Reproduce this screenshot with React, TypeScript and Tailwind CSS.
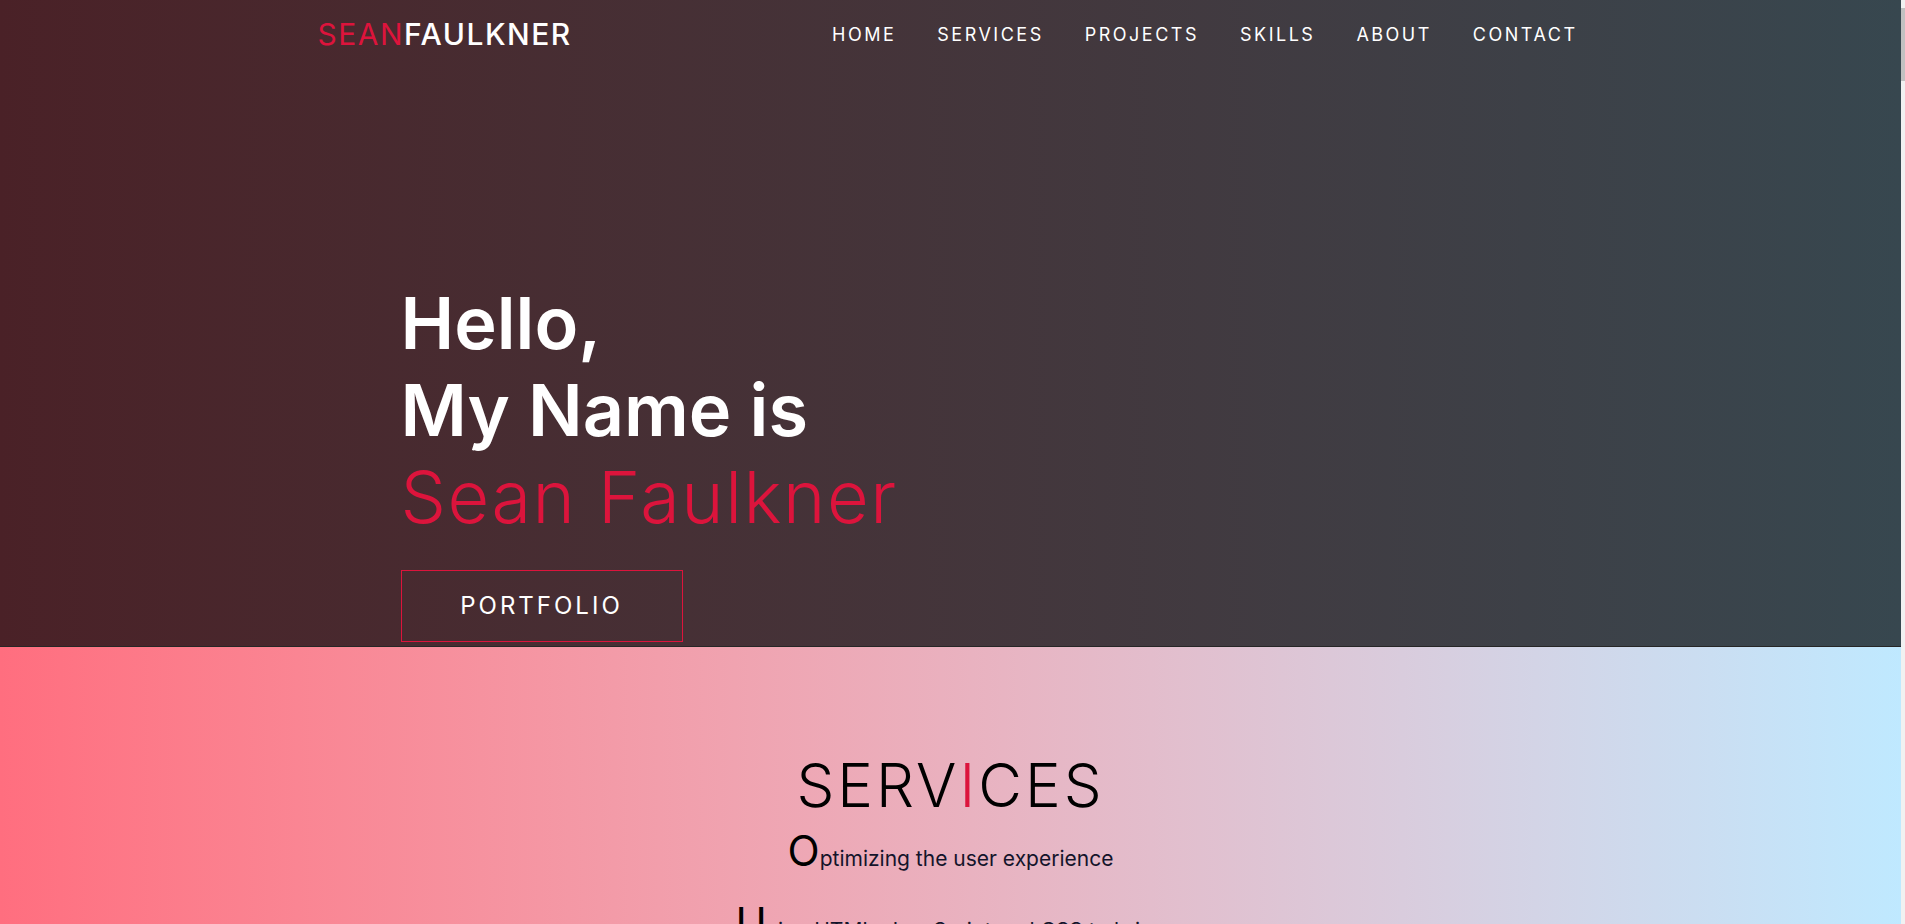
import React from "react";

const navLinks = ["HOME", "SERVICES", "PROJECTS", "SKILLS", "ABOUT", "CONTACT"];

export default function App() {
  return (
    <div className="flex h-[924px] w-full overflow-hidden font-['Inter','Open_Sans',sans-serif]">
      <main className="flex-1 min-w-0">
        {/* hero */}
        <section className="h-[647px] bg-gradient-to-r from-[#4a2127] to-[#37474f] border-b border-[#262626] flex flex-col">
          <nav className="max-w-[1266px] w-full mx-auto h-[68px] flex items-center justify-between">
            <a href="#" className="text-[30px] tracking-[1.5px] leading-none">
              <span className="text-[#dc143c] font-normal">SEAN</span>
              <span className="text-white font-medium">FAULKNER</span>
            </a>
            <ul className="flex items-center gap-[41px] pr-[6px]">
              {navLinks.map((link) => (
                <li key={link}>
                  <a href="#" className="text-white text-[18px] tracking-[2.5px]">
                    {link}
                  </a>
                </li>
              ))}
            </ul>
          </nav>

          <div className="max-w-[1266px] w-full mx-auto pl-[83px] pt-[211px]">
            <h1 className="text-[72px] leading-[87px]">
              <span className="block text-white font-semibold">Hello,</span>
              <span className="block text-white font-semibold">My Name is</span>
              <span className="block text-[#dc143c] font-light tracking-[1.5px]">Sean Faulkner</span>
            </h1>
            <button className="mt-[30px] w-[282px] h-[72px] border border-[#dc143c] text-white text-[24px] tracking-[3px]">
              PORTFOLIO
            </button>
          </div>
        </section>

        {/* services */}
        <section className="h-[400px] bg-gradient-to-r from-[#ff6e7f] to-[#bfe9ff] text-center text-[#14142b] pt-[102px]">
          <h2 className="text-[60px] leading-[72px] font-light tracking-[3px] text-black">
            SERV<span className="text-[#dc143c]">I</span>CES
          </h2>
          <p className="mt-[9px] text-[21px] leading-none">
            <span className="text-[42px] leading-none text-black">O</span>ptimizing the user experience
          </p>
          <p className="mt-[30px] text-[21px] leading-none">
            <span className="text-[42px] leading-none text-black">U</span>sing HTML, JavaScript and CSS to bring
          </p>
        </section>
      </main>
      <aside className="w-[4px] bg-[#f1f1f1] flex flex-col pt-[8px]">
        <div className="h-[73px] bg-[#c1c1c1]" />
      </aside>
    </div>
  );
}
